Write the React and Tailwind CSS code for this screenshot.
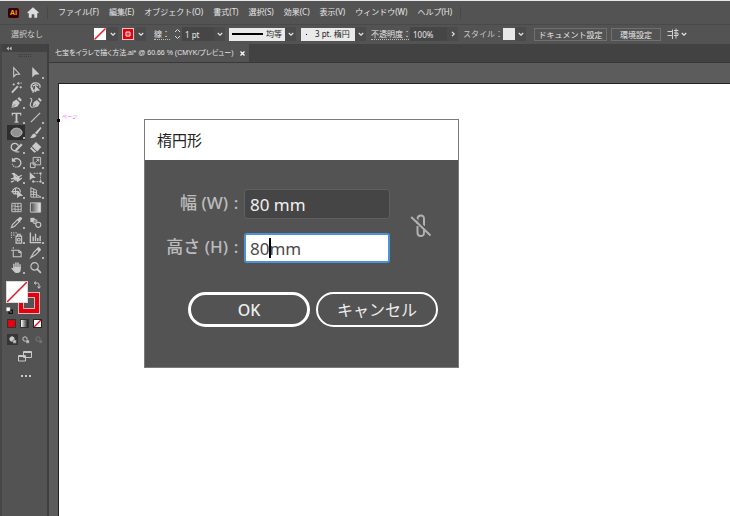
import React from 'react';

const ui = "font-['Noto_Sans','Noto_Sans_CJK_JP',sans-serif]";

function Icon({ children, className = 'size-[14px]', box = '0 0 14 14' }) {
  return (
    <svg viewBox={box} className={className} fill="none" stroke="currentColor" strokeWidth="1.2" aria-hidden="true">
      {children}
    </svg>
  );
}

function Chevron({ side }) {
  return (
    <svg viewBox="0 0 6 6" className="size-[6px] shrink-0" fill="none" stroke="#e4e4e4" strokeWidth="1.2" aria-hidden="true">
      <path d={side ? 'M2 0.8 4.2 3 2 5.2' : 'M0.8 2 3 4.2 5.2 2'} />
    </svg>
  );
}

function DropButton({ label, side }) {
  return (
    <button type="button" aria-label={label} className="flex h-[14px] w-[11px] shrink-0 items-center justify-center bg-[#4b4b4b]">
      <Chevron side={side} />
    </button>
  );
}

const menus = ['ファイル(F)', '編集(E)', 'オブジェクト(O)', '書式(T)', '選択(S)', '効果(C)', '表示(V)', 'ウィンドウ(W)', 'ヘルプ(H)'];

function MenuBar() {
  return (
    <header className="flex h-6 items-center border-t border-[#e8e8e8] bg-[#535353] pl-2">
      <span className="flex h-[10px] w-[11px] items-center justify-center rounded-[2px] bg-[#330000] text-[7px] leading-none font-bold text-[#ff9a00]">Ai</span>
      <button type="button" aria-label="ホーム" className="ml-2 text-[#dcdcdc]">
        <svg viewBox="0 0 12 11" className="h-[11px] w-3" fill="currentColor" aria-hidden="true">
          <path d="M6 0.3 11.8 5.6 11 6.5 10.2 5.9V10.8H7.3V7.2H4.7V10.8H1.8V5.9L1 6.5 0.2 5.6Z" />
        </svg>
      </button>
      <span className="ml-2 h-3 w-px bg-[#474747]" />
      <nav className="ml-[10px] flex gap-x-[10px]">
        {menus.map((m) => (
          <button key={m} type="button" className="pb-[2px] text-[8px] leading-3 whitespace-nowrap text-[#e6e6e6]">{m}</button>
        ))}
      </nav>
      <span className="ml-2 h-3 w-px bg-[#474747]" />
    </header>
  );
}

function ControlBar() {
  return (
    <div className="flex h-5 items-center overflow-hidden border-t border-[#494949] bg-[#535353] pb-px text-[8px] leading-3 whitespace-nowrap text-[#e6e6e6]">
      <span className="w-[94px] shrink-0 pl-[11px] text-[#d0d0d0]">選択なし</span>
      <button type="button" aria-label="塗り" className="mr-px size-3 shrink-0 bg-white">
        <svg viewBox="0 0 12 12" className="size-3" stroke="#e3141e" strokeWidth="1.4" aria-hidden="true"><path d="M0.5 11.5 11.5 0.5" /></svg>
      </button>
      <DropButton label="塗りの選択" />
      <button type="button" aria-label="線の色" className="mr-px ml-1 size-3 shrink-0 border border-[#f4c0c0] bg-[#e3000f]">
        <svg viewBox="0 0 10 10" className="size-[10px]" fill="none" stroke="#fff" aria-hidden="true"><path d="M3 3h4v4h-4z" /><path d="M4.5 4.5h1v1h-1z" fill="#fff" stroke="none" /></svg>
      </button>
      <DropButton label="線の色の選択" />
      <label htmlFor="stroke" className="ml-2 w-[19px] shrink-0"><span className="border-b border-dotted border-[#bbb]">線：</span></label>
      <button type="button" aria-label="線幅の増減" className="flex w-[9px] shrink-0 justify-center">
        <svg viewBox="0 0 7 12" className="h-3 w-[7px]" fill="none" stroke="#dcdcdc" aria-hidden="true"><path d="M1 4 3.5 1.5 6 4M1 8 3.5 10.5 6 8" /></svg>
      </button>
      <input id="stroke" defaultValue="1 pt" className="h-[14px] w-8 shrink-0 bg-[#464646] pl-[3px] text-[8px]" />
      <DropButton label="線幅の選択" />
      <div className="ml-1 flex h-[13px] w-[56px] shrink-0 items-center bg-[#eaeaea]">
        <span className="ml-[3px] h-[2px] w-[31px] bg-black" />
        <select aria-label="プロファイル" className="h-3 w-5 appearance-none pl-[3px] text-[8px] text-[#222]"><option>均等</option></select>
      </div>
      <DropButton label="プロファイルの選択" />
      <div className="ml-[5px] flex h-[13px] w-[54px] shrink-0 items-center bg-[#eaeaea]">
        <span className="ml-[5px] size-px bg-black" />
        <select aria-label="ブラシ" className="ml-2 h-3 w-10 appearance-none text-[8px] text-[#222]"><option>3 pt. 楕円</option></select>
      </div>
      <DropButton label="ブラシの選択" />
      <label htmlFor="opacity" className="ml-[5px] w-[39px] shrink-0"><span className="border-b border-dotted border-[#bbb]">不透明度：</span></label>
      <input id="opacity" defaultValue="100%" className="h-[14px] w-[37px] shrink-0 bg-[#464646] pl-[3px] text-[8px]" />
      <DropButton label="不透明度の選択" side />
      <span className="ml-[5px] w-10 shrink-0 text-[#c8c8c8]">スタイル：</span>
      <button type="button" aria-label="グラフィックスタイル" className="size-3 shrink-0 bg-[#e8e8e8]" />
      <DropButton label="スタイルの選択" />
      <button type="button" className="ml-2 h-[13px] w-[73px] shrink-0 border border-[#707070] leading-[11px]">ドキュメント設定</button>
      <button type="button" className="ml-1 h-[13px] w-[50px] shrink-0 border border-[#707070] leading-[11px]">環境設定</button>
      <button type="button" aria-label="整列" className="ml-[6px] flex shrink-0 items-center gap-x-[2px] text-[#cfcfcf]">
        <Icon className="size-3" box="0 0 12 12">
          <path d="M.5 3.500h5v4h-5M5.500 1.500v9.500M7 2.500h4.500M7 5h4v2.500H7M9 .5v10" strokeWidth="1" />
        </Icon>
        <Chevron />
      </button>
    </div>
  );
}

const tools = [
  ['選択', 0, <path d="M4 1.8V11.4L6.5 9 10.2 8.6Z" />],
  ['ダイレクト選択', 1, <path d="M3.500 1V12.500L6.500 9.400 11.300 9Z" fill="currentColor" stroke="none" />],
  ['自動選択', 0, <><path d="M2 12.5 8.5 5.5" strokeWidth="2" /><path d="M9 1v3M7.5 2.5h3M11.5 5.5v2.5M10.2 6.8h2.6M4 2.5v2.4M2.8 3.7h2.4M12 1.5v1.5" strokeWidth="1" /></>],
  ['なげなわ', 0, <><path d="M4.5 9.5C1 8 1.5 2.5 6.500 2S13 5.500 11.500 7.500M4.500 7.500a1.500 1.500 0 1 0 1 2.500c0 1.500-1 2-2 2M4 5.500 7 4l3 1" strokeWidth="1.400" /><path d="M6.500 4.500v8l2-2 3.500-.4Z" fill="currentColor" stroke="none" /></>],
  ['ペン', 1, <><path d="M1.500 12.800 3 6.300 7 3.700 10.500 7.200 8 11.300 Z" fill="currentColor" stroke="none" /><path d="M8 2.900 9.800 1.200 12.800 4.200 11.200 6Z" fill="currentColor" stroke="none" /><path d="M2 12.500 5.500 9" stroke="#535353" strokeWidth=".8" /></>],
  ['曲線', 0, <><path d="M3.500 12.800 5 6.800 8.500 4.200 11.800 7.500 9.500 11.300Z" fill="currentColor" stroke="none" /><path d="M9.500 3.300 11 1.800 13.800 4.500 12.200 6.200Z" fill="currentColor" stroke="none" /><path d="M1 2.500C5 3 2 6 1.500 8.500S2 12 4 12.500" /><path d="M4 12.500 7.500 9" stroke="#535353" strokeWidth=".8" /></>],
  ['文字', 1, <><path d="M2.500 4.800V2.600h9v2.200" strokeWidth="1.300" /><path d="M7 2.500v9.500" strokeWidth="2" /><path d="M4.800 12h4.400" strokeWidth="1.200" /></>],
  ['直線', 1, <path d="M2 12 12 2" />],
  ['楕円形', 1, <ellipse cx="7" cy="7" rx="6" ry="4.700" fill="#929292" stroke="#c2c2c2" strokeWidth="1" />],
  ['ブラシ', 1, <><path d="M6.300 7.500 12.300 1 13.500 2.200 8.500 9Z" fill="currentColor" stroke="none" /><path d="M5.800 8 8 10C7.600 12.800 4 13.300 1 12.700 3.300 11.500 2.800 8.300 5.800 8Z" fill="currentColor" stroke="none" /></>],
  ['Shaper', 1, <><path d="M7.500 9.800A4 4 0 1 1 9 5" strokeWidth="1.400" /><path d="M4.800 11.500 6 8.500 11.800 2.600 13.500 4.300 7.700 10.200Z" fill="currentColor" stroke="none" /><path d="M6 11.700h4" /></>],
  ['消しゴム', 1, <><path d="M7.500 1 13.300 6.500 8.900 11.200 3.100 5.700Z" fill="currentColor" stroke="none" /><path d="M2.700 6.800 1.700 8 5.800 12 7.500 11.300" fill="currentColor" strokeWidth="1" /></>],
  ['回転', 1, <><path d="M4 3.800A4.700 4.700 0 1 1 8 12" strokeWidth="1.400" /><path d="M7 12A4.700 4.700 0 0 1 2.500 8.500" strokeDasharray="1.300 1.200" strokeWidth="1.400" /><path d="M2 1.500v4.800h4.800Z" fill="currentColor" stroke="none" /></>],
  ['拡大・縮小', 1, <><path d="M4.500 1.500h8v8h-8zM1.500 7.500h5v5h-5z" strokeWidth="1" /><path d="M7 7 10.500 3.500M8 3.500h2.500v2.500" strokeWidth="1" /></>],
  ['線幅', 1, <><path d="M1 8.500 4 8 7 10.500M5.500 3.500 9 6.500 12.800 4.500M1 12 4.500 10.500M9.500 10 12.800 7.500" strokeWidth="1.300" /><path d="M1.500 2.500 5 2 6.500 6 10 6.500 11 9.500 8 12 6.500 9 3.500 8.500 4 5Z" fill="currentColor" stroke="none" /></>],
  ['自由変形', 1, <><path d="M.8 1v9l2.500-2.300 4-.5Z" fill="currentColor" stroke="none" /><path d="M5 2.500h8M12.500 3v9M13 11.500H4M4.500 12V9" strokeDasharray="2 1" strokeWidth="1" /><path d="M11.500 1.500h2v2h-2zM11.500 10.500h2v2h-2zM3.500 10.500h2v2h-2z" fill="currentColor" stroke="none" /></>],
  ['シェイプ形成', 1, <><path d="M8.5 8.5H4.500A3 3 0 0 1 4 3.500 4 4 0 0 1 11 5v2M1.500 6h8M6 2v6" /><path d="M7.700 4.500v8.800l2.300-2.300 4-.4Z" fill="currentColor" stroke="none" /></>],
  ['遠近グリッド', 1, <path d="M2 1.500v10.500h11M2 2 8 4.500V9M5 3.500V12M2 6l6 1M2 9h6l5 3M8 9v3" strokeWidth="1" />],
  ['メッシュ', 0, <><path d="M2 2.500h10v9H2z" strokeWidth="1" /><path d="M2 6C5 3.500 7 8 12 5M2 9.500C5 7 8 11 12 8.500M5 2.500C7 5 4 8 6 11.500M9 2.500C7 5 10 8 8.500 11.500" strokeWidth=".9" /></>],
  ['グラデーション', 0, <><defs><linearGradient id="tg"><stop stopColor="#444" /><stop offset="1" stopColor="#eee" /></linearGradient></defs><path d="M1.500 2h11v10h-11z" fill="url(#tg)" strokeWidth="1" /></>],
  ['スポイト', 1, <><path d="M1.500 12.500 2.700 9.300 8 4 10 6 4.800 11.300Z" /><path d="M6.800 3 8.300 3.200 10.500 1Q12.800 .6 13.200 3L10.900 5.500 11.200 7.200Z" fill="currentColor" stroke="none" /></>],
  ['ブレンド', 0, <><path d="M1.500 2h4.500v4.500H1.500z" fill="currentColor" stroke="none" /><rect x="4.500" y="4" width="4" height="4" rx="1" fill="#888" strokeWidth="1" /><circle cx="10" cy="9.500" r="2.700" fill="#535353" /></>],
  ['シンボルスプレー', 1, <><path d="M6.500 5.500h6v7.500h-6zM8 5V3.500h3V5" /><circle cx="9.500" cy="9.300" r="1.500" /><path d="M1 2h1.200M3.500 2h1.200M6 2h1.200M1 4.500h1.200M3.500 4.500h1.200M1 7h1.200" /></>],
  ['棒グラフ', 1, <path d="M1.500 1.500v11h11.500M4.500 11V6M7 11V3M9.500 11V7.500M12 11V5" strokeWidth="1.500" />],
  ['アートボード', 0, <path d="M3.500 1v2M1 4.500h2M3.500 4.500v7h8.500v-5l-2.500-2h-6M9.500 4.500v2.500h2.500" strokeWidth="1.100" />],
  ['スライス', 1, <><path d="M2 12.500 5 7 10 2 12 4.500 7 9.500Z" /><path d="M8 3.500 10.500 1 13 3.500 10.500 6Z" fill="currentColor" stroke="none" /></>],
  ['手のひら', 1, <><path d="M4.200 8V3.500M6.400 7V2M8.600 7V2.200M10.800 8V4" strokeWidth="1.500" strokeLinecap="round" /><path d="M3.500 6.500h8V10Q11 13 8 13H6.500Q5 12.500 1.300 8L2.200 7.300 4 8.500Z" fill="currentColor" stroke="none" /></>],
  ['ズーム', 0, <><circle cx="6" cy="5.800" r="4" /><path d="M8.800 8.700 12.800 12.700" strokeWidth="1.800" /></>],
];

function ToolPanel() {
  return (
    <aside className="w-[49px] shrink-0 border-r-2 border-l-2 border-r-[#3f3f3f] border-l-[#474747] bg-[#535353] text-[#c9c9c9]">
      <button type="button" aria-label="パネルを折りたたむ" className="flex h-2 w-full items-center bg-[#424242] pl-1">
        <svg viewBox="0 0 6 5" className="h-[5px] w-[6px]" fill="currentColor" aria-hidden="true"><path d="M2.800 0.500v4L0.500 2.500zM5.600 0.500v4L3.300 2.500z" /></svg>
      </button>
      <div className="mx-auto mt-[2px] h-[3px] w-3 border-y border-dotted border-[#3e3e3e]" />
      <div className="mt-2 ml-[5px] grid w-[38px] grid-cols-2">
        {tools.map(([name, more, art]) => (
          <button key={name} type="button" aria-label={name} className={`relative flex h-[15px] w-[18px] items-center justify-center ${name === '楕円形' ? 'bg-[#2e2e2e]' : ''}`}>
            <Icon className="size-[13px]">{art}</Icon>
            {more === 1 && <span className="absolute right-0 bottom-px size-[2px] bg-[#b4b4b4]" />}
          </button>
        ))}
      </div>
      <div className="relative mt-[6px] ml-1 h-[34px] w-[38px]">
        <button type="button" aria-label="線" className="absolute top-[11px] left-[12px] size-[22px] border border-[#e9b5b5] bg-[#e3000f] p-1">
          <span className="block size-3 border border-[#e9b5b5] bg-[#535353]" />
        </button>
        <button type="button" aria-label="塗り" className="absolute top-0 left-0 size-[22px] border border-[#d8d8d8] bg-white">
          <svg viewBox="0 0 20 20" className="size-5" stroke="#e3141e" strokeWidth="1.500" aria-hidden="true"><path d="M0 20 20 0" /></svg>
        </button>
        <button type="button" aria-label="塗りと線を入れ替え" className="absolute top-0 left-[27px]">
          <Icon className="size-2" box="0 0 8 8"><path d="M1.500 2H4.500Q6 2 6 3.500V6.500M3 .5 1.200 2 3 3.500M4.500 5.500 6 7.300 7.500 5.500" strokeWidth="1" /></Icon>
        </button>
        <button type="button" aria-label="初期設定" className="absolute top-[26px] left-0">
          <Icon className="size-[7px]" box="0 0 7 7"><path d="M3 3h3.500v3.500H3z" fill="#111" stroke="#111" /><path d="M.5.5h3.500v3.500H.5z" fill="#fff" stroke="#bbb" strokeWidth=".5" /><path d="M4.500 4.500h1v1h-1z" fill="#fff" stroke="none" /></Icon>
        </button>
      </div>
      <div className="mt-1 ml-[5px] flex gap-x-1">
        <button type="button" aria-label="カラー" className="size-[9px] border border-[#333] bg-[#e3000f]" />
        <button type="button" aria-label="グラデーション塗り" className="size-[9px] border border-[#333] bg-linear-to-r from-white to-[#222]" />
        <button type="button" aria-label="なし" className="size-[9px] border border-[#222] bg-white">
          <svg viewBox="0 0 7 7" className="size-[7px]" stroke="#e3141e" strokeWidth="1.500" aria-hidden="true"><path d="M0 7 7 0" /></svg>
        </button>
      </div>
      <div className="mt-[6px] ml-[5px] flex gap-x-[2px]">
        {['標準描画', '背面描画', '内側描画'].map((m, i) => (
          <button key={m} type="button" aria-label={m} className={`flex size-[11px] items-center justify-center ${['bg-[#353535]', '', 'opacity-30'][i]}`}>
            <Icon className="size-2" box="0 0 8 8"><circle cx="3" cy="3" r="2.200" fill={i === 0 ? 'currentColor' : 'none'} strokeWidth="1" /><path d="M4 4h3.200v3.200H4z" fill="currentColor" stroke="#535353" strokeWidth=".5" /></Icon>
          </button>
        ))}
      </div>
      <button type="button" aria-label="スクリーンモード" className="mt-[6px] ml-4 block">
        <svg viewBox="0 0 14 11" className="h-[11px] w-[14px]" fill="#535353" stroke="currentColor" aria-hidden="true"><path d="M5.500.5h8v6h-8zM5.500 1.500h8M.5 4.500h7v5.500H.5zM.5 5.500h7" /></svg>
      </button>
      <button type="button" aria-label="ツールバーを編集" className="mt-[11px] ml-[19px] flex h-[5px] items-center gap-x-[2px]">
        <span className="size-[2px] bg-current" /><span className="size-[2px] bg-current" /><span className="size-[2px] bg-current" />
      </button>
    </aside>
  );
}

function EllipseDialog() {
  const label = 'flex items-center justify-end pb-[2px] text-[17px] leading-6 font-medium whitespace-nowrap text-[#bcbcbc]';
  return (
    <section role="dialog" aria-label="楕円形" className="absolute top-[35px] left-[85px] w-[315px] border border-[#7b7b7b] bg-[#535353] pb-10">
      <h1 className="h-10 bg-white pl-3 text-[15px] leading-10 text-[#222]">楕円形</h1>
      <div className="mt-[29px] flex items-center">
        <div className="grid grid-cols-[99px_146px] gap-y-[14px]">
          <label htmlFor="w" className={label}><span>幅 (W)</span><span className="w-4 text-center">:</span></label>
          <input id="w" defaultValue="80 mm" className="h-[30px] rounded-[3px] border border-[#606060] bg-[#454545] pl-[5px] text-[17px] text-[#f0f0f0]" />
          <label htmlFor="h" className={label}><span>高さ (H)</span><span className="w-4 text-center">:</span></label>
          <div className="relative">
            <input id="h" defaultValue="80mm" className="h-[30px] w-full rounded-[3px] border-2 border-[#4a94dc] bg-white pl-1 text-[17px] text-[#4a4a4a]" />
            <span className="absolute top-[5px] left-[25px] h-5 w-[2px] bg-black" />
          </div>
        </div>
        <button type="button" aria-label="縦横比を固定" className="ml-5 text-[#b0b0b0]">
          <svg viewBox="0 0 22 24" className="h-6 w-[22px]" fill="none" stroke="currentColor" strokeWidth="2" aria-hidden="true">
            <path d="M7.500 10V5Q7.500 1.500 10.800 1.500T14 5V12M7.500 12V18.500Q7.500 22 10.800 22T14 18.500V15" />
            <path d="M3.500 2.500 22 20.300" stroke="#535353" strokeWidth="1.500" />
            <path d="M1.200 3 20.500 21.500" />
          </svg>
        </button>
      </div>
      <div className="mt-[29px] ml-[43px] flex gap-x-[6px] text-[16px] text-[#ededed]">
        <button type="submit" className="h-[35px] w-[122px] rounded-full border-[3px] border-white font-medium">OK</button>
        <button type="button" className="h-[35px] w-[122px] rounded-full border-2 border-white">キャンセル</button>
      </div>
    </section>
  );
}

export default function App() {
  return (
    <div lang="ja" className={`flex min-h-screen flex-col bg-[#535353] ${ui}`}>
      <MenuBar />
      <ControlBar />
      <div className="flex flex-1">
        <ToolPanel />
        <main className="flex min-w-0 flex-1 flex-col">
          <div className="flex h-[19px] border-b border-[#383838] bg-[#424242]">
            <div className="flex w-[200px] items-center justify-between bg-[#535353] pr-1 pl-[6px] font-['Liberation_Sans','Noto_Sans_CJK_JP',sans-serif] text-[7px] whitespace-nowrap text-[#e6e6e6] [font-feature-settings:'palt']">
              <span>七宝をイラレで描く方法.ai* @ 60.66 % (CMYK/プレビュー)</span>
              <button type="button" aria-label="閉じる">
                <svg viewBox="0 0 5 5" className="size-[5px]" stroke="#fff" strokeWidth="1.300" aria-hidden="true"><path d="M.5.5 4.500 4.500M4.500.5.5 4.500" /></svg>
              </button>
            </div>
          </div>
          <div className="flex flex-1 bg-[#5c5c5c] pt-5 pl-[9px]">
            <div className="relative flex-1 border-t border-l border-[#222] bg-white">
              <span className="absolute top-[35px] -left-[2px] size-[3px] bg-black" />
              <span className="absolute top-7 left-[3px] text-[5px] leading-2 whitespace-nowrap text-[#ee55ee]">ページ</span>
              <EllipseDialog />
            </div>
          </div>
        </main>
      </div>
    </div>
  );
}
